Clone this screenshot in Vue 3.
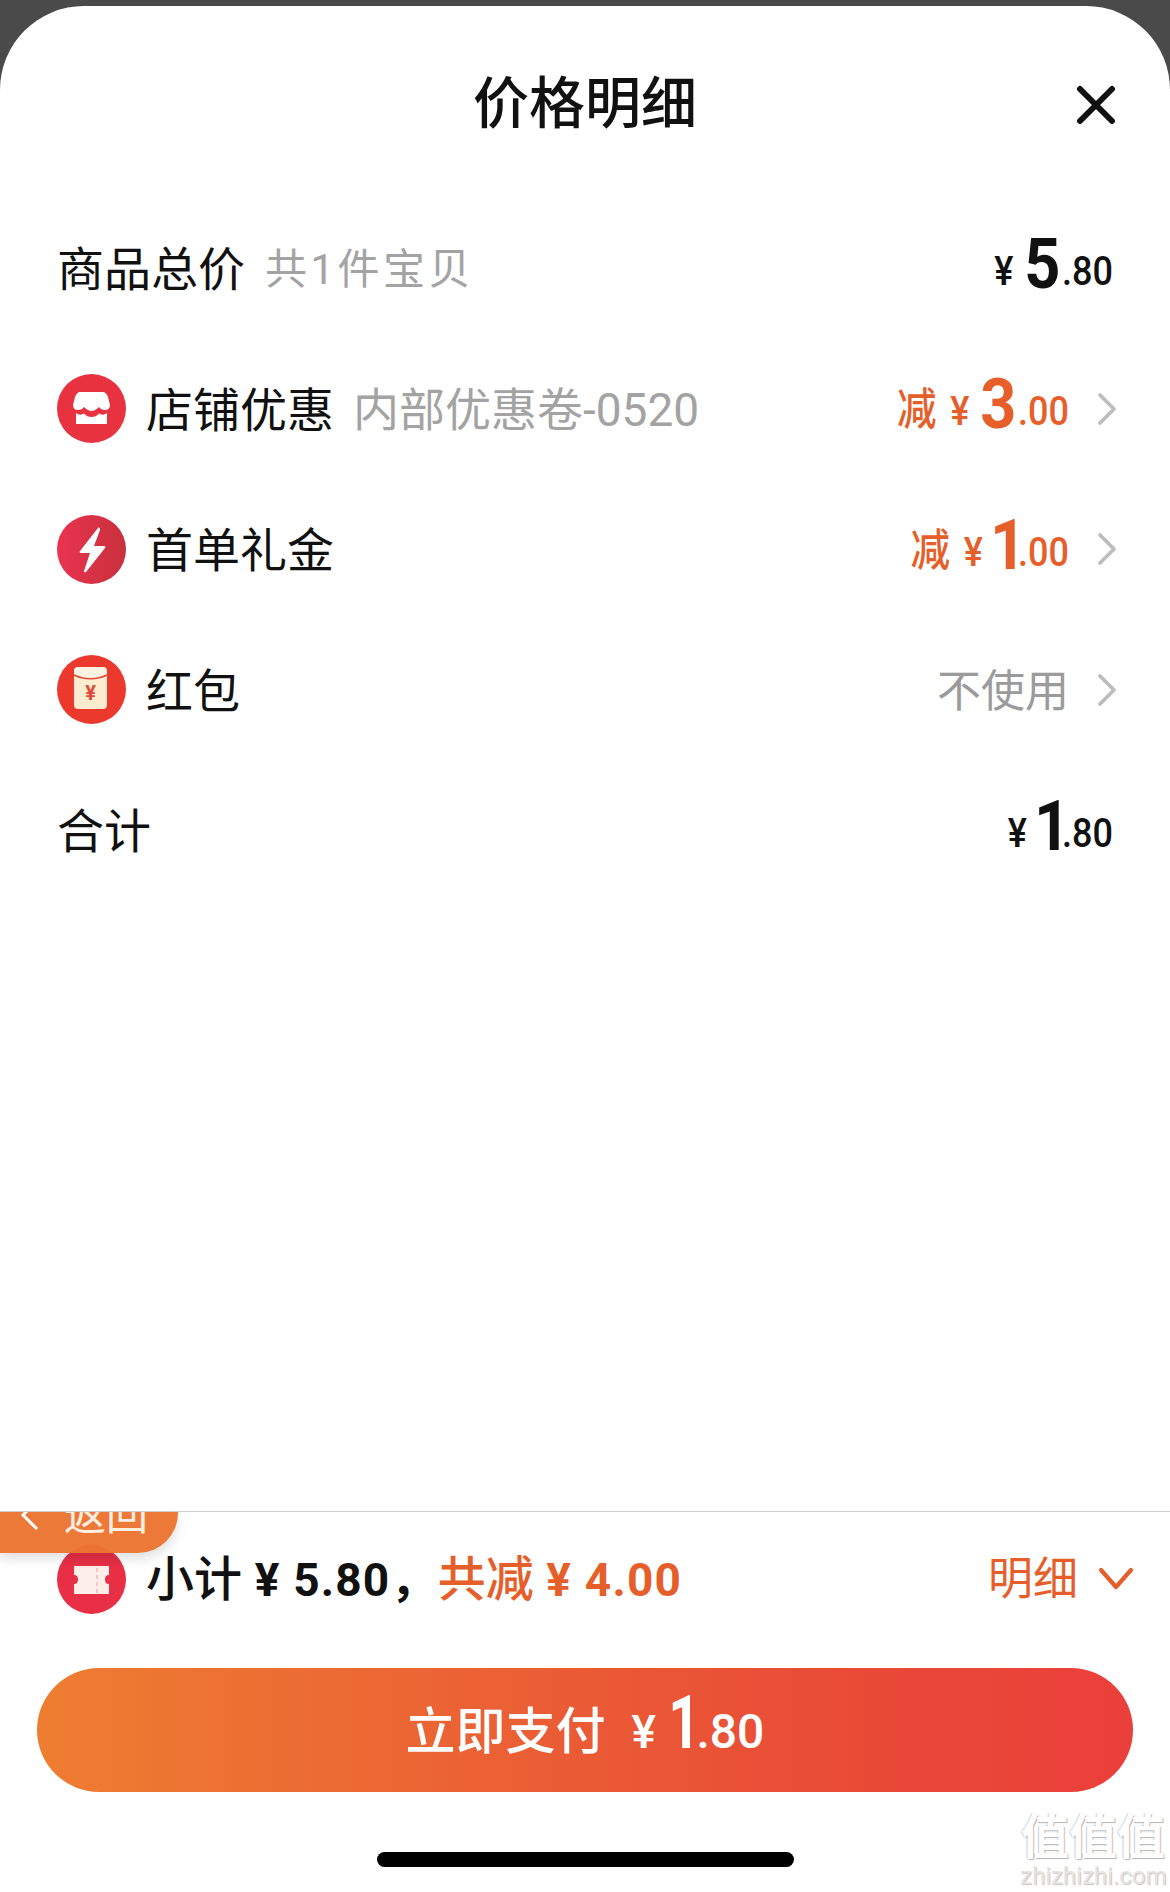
<script setup>
const rows = [
  { id: 'shop', label: '店铺优惠', sub: '内部优惠卷-0520', prefix: '减', big: '3', small: '.00' },
  { id: 'bolt', label: '首单礼金', prefix: '减', big: '1', small: '.00' },
  { id: 'packet', label: '红包', none: '不使用' }
]
</script>

<template>
  <div class="page">
    <div class="sheet">
      <!-- 标题 -->
      <header class="head">
        <h1 class="title">价格明细</h1>
        <svg class="close" viewBox="0 0 40 40">
          <path d="M4 4 36 36M36 4 4 36" stroke="#111" stroke-width="6" stroke-linecap="round" fill="none" />
        </svg>
      </header>

      <div class="row">
        <span class="label">商品总价</span>
        <span class="sub sub-first">共1件宝贝</span>
        <span class="price dark">
          <span class="yen">¥</span><span class="big">5</span><span class="small">.80</span>
        </span>
      </div>

      <div class="row" v-for="r in rows" :key="r.id">
        <svg class="icon" viewBox="0 0 69 69">
          <template v-if="r.id === 'shop'">
            <circle cx="34.5" cy="34.5" r="34.5" fill="#e8323f" />
            <path d="M23 18H46C48 18 50 20 51 23L53 31Q53 36 48 36Q44 36 42 33Q38 37 34.500 37Q31 37 27 33Q25 36 21 36Q16 36 16 31L18 23C19 20 21 18 23 18Z" fill="#fff" />
            <path d="M19 39Q23 42 27 39.500Q30 43 34.500 43Q39 43 42 39.500Q46 42 50 39V50H19Z" fill="#fff" />
          </template>
          <template v-else-if="r.id === 'bolt'">
            <defs>
              <linearGradient id="boltBg" x1="0" y1="0" x2="1" y2="0">
                <stop offset="0" stop-color="#ea3350" />
                <stop offset="1" stop-color="#c8303c" />
              </linearGradient>
            </defs>
            <circle cx="34.5" cy="34.5" r="34.5" fill="url(#boltBg)" />
            <path d="M41 13 23 36c-1 1 0 2 1 2h9l-6 18c0 1 1 2 2 1l19-24c1-1 0-2-1-2H37l6-16c0-2-1-3-2-2z" fill="#fff" />
          </template>
          <template v-else>
            <circle cx="34.5" cy="34.5" r="34.5" fill="#ec392e" />
            <rect x="17" y="12" width="33" height="42" rx="4" fill="#fdeccf" />
            <path d="M17 16c0-2 2-4 4-4h25c2 0 4 2 4 4v4c-10 5-23 5-33 0z" fill="#fdf3e2" />
            <path d="M17 20c10 5 23 5 33 0" stroke="#e2493a" stroke-width="1.6" fill="none" />
            <text x="33.5" y="45" text-anchor="middle" class="packet-yen">¥</text>
          </template>
        </svg>
        <span class="label">{{ r.label }}</span>
        <span v-if="r.sub" class="sub">{{ r.sub }}</span>
        <span v-if="r.none" class="none">不使用</span>
        <span v-else class="price orange">
          <span class="cut">{{ r.prefix }}</span><span class="yen">¥</span><span class="big" :class="{ narrow: r.big === '1' }">{{ r.big }}</span><span class="small">{{ r.small }}</span>
        </span>
        <svg class="arrow" viewBox="0 0 20 34">
          <path d="M3 3 17 17 3 31" stroke="#bdbdbd" stroke-width="3.8" stroke-linecap="round" stroke-linejoin="round" fill="none" />
        </svg>
      </div>

      <div class="row">
        <span class="label">合计</span>
        <span class="price dark">
          <span class="yen">¥</span><span class="big narrow">1</span><span class="small">.80</span>
        </span>
      </div>

      <footer class="foot">
        <div class="back">
          <svg class="back-arrow" viewBox="0 0 20 34">
            <path d="M17 3 3 17 17 31" stroke="#fff" stroke-width="3" fill="none" />
          </svg>
          <span>返回</span>
        </div>

        <div class="total">
          <svg class="icon" viewBox="0 0 69 69">
            <circle cx="34.5" cy="34.5" r="34.5" fill="#e92f46" />
            <path d="M17 21h35v9c-3 0-4 2-4 4.500s1 4.500 4 4.500v10H17V39c3 0 4-2 4-4.500S20 30 17 30z" fill="#fdeeea" />
            <path d="M40 23v25" stroke="#f5b5b0" stroke-width="1.400" stroke-dasharray="4 3" />
          </svg>
          <span class="sum">小计<span class="num"> ¥ 5.80，</span></span>
          <span class="saved">共减<span class="num"> ¥ 4.00</span></span>
          <span class="detail">明细</span>
          <svg class="down" viewBox="0 0 36 26">
            <path d="M3 4 18 21 33 4" stroke="#e65f2b" stroke-width="4.200" stroke-linecap="round" stroke-linejoin="round" fill="none" />
          </svg>
        </div>

        <button class="pay">
          <span class="pay-text">立即支付</span>
          <span class="pay-price"><span class="yen">¥</span><span class="big">1</span><span class="small">.80</span></span>
        </button>

        <div class="home-bar"></div>
      </footer>
    </div>

    <!-- 水印 -->
    <div class="mark">
      <div class="mark-cn">值值值</div>
      <div class="mark-en">zhizhizhi.com</div>
    </div>
  </div>
</template>

<style scoped>
.page {
  position: relative;
  width: 1170px;
  height: 1892px;
  overflow: hidden;
  background: #4a4a4a;
  padding-top: 6px;
  box-sizing: border-box;
  font-family: Roboto, "Noto Sans CJK SC", sans-serif;
  color: #111;
}

.sheet {
  height: 1886px;
  background: #fff;
  border-radius: 84px 84px 0 0;
  display: flex;
  flex-direction: column;
}

.head {
  height: 192px;
  flex-shrink: 0;
  display: grid;
  grid-template-columns: 1fr auto 1fr;
  align-items: center;
  box-sizing: border-box;
}

.title {
  grid-column: 2;
  margin: 4px 0 0;
  font-size: 56px;
  font-weight: 500;
  line-height: 70px;
}

.close {
  justify-self: end;
  width: 40px;
  height: 40px;
  margin-right: 54px;
  margin-top: 6px;
}

.row {
  height: 140.500px;
  flex-shrink: 0;
  display: flex;
  align-items: center;
  padding: 0 53px 0 57px;
  box-sizing: border-box;
}

.icon {
  width: 69px;
  height: 69px;
  flex-shrink: 0;
  margin-right: 20px;
}

.label {
  font-size: 47px;
  line-height: 60px;
  margin-top: 4px;
}

.sub {
  font-size: 46px;
  color: #a3a3a3;
  margin-left: 19px;
  margin-bottom: 5px;
}

.sub-first {
  font-size: 42px;
  letter-spacing: 3.500px;
  margin-left: 20px;
}

.none {
  margin-left: auto;
  font-size: 44px;
  color: #9b9b9b;
  margin-bottom: 4px;
}

.price {
  margin-left: auto;
  display: inline-block;
  font-weight: 500;
  line-height: 70px;
  transform: scaleX(0.9);
  transform-origin: right center;
  white-space: nowrap;
  margin-top: 10px;
}

.dark {
  color: #111;
  margin-right: 4px;
}

.orange {
  color: #e65f2b;
}

.yen {
  font-size: 40px;
  margin-right: 12px;
  vertical-align: 3px;
}

.big {
  font-size: 70px;
  font-weight: 700;
  margin-right: 2px;
}

.narrow {
  margin-left: -4px;
  margin-right: 0;
  letter-spacing: -9px;
}

.small {
  font-size: 40px;
  vertical-align: 3px;
}

.cut {
  font-size: 44px;
  margin-right: 15px;
  vertical-align: 3px;
}

.arrow {
  width: 20px;
  height: 34px;
  margin-left: 28px;
  flex-shrink: 0;
}

.packet-yen {
  font-size: 20px;
  font-weight: 700;
  fill: #e2493a;
}

.foot {
  margin-top: auto;
  position: relative;
  border-top: 1px solid #cfcfcf;
  display: flex;
  flex-direction: column;
  align-items: center;
  padding-bottom: 25px;
}

.back {
  position: absolute;
  left: 0;
  top: 0;
  width: 178px;
  height: 41px;
  overflow: hidden;
  display: flex;
  align-items: flex-end;
  box-sizing: border-box;
  padding-left: 20px;
  background: rgba(236, 116, 48, 0.96);
  border-radius: 0 0 40px 0;
  box-shadow: 0 6px 12px rgba(0, 0, 0, 0.12);
  color: #fdeee2;
  font-size: 42px;
  line-height: 62px;
}

.back-arrow {
  width: 20px;
  height: 34px;
  flex-shrink: 0;
  margin-right: 24px;
  margin-bottom: 21px;
}

.back span {
  display: block;
  height: 62px;
  margin-bottom: 6px;
}

.total {
  align-self: stretch;
  height: 134px;
  display: flex;
  align-items: center;
  padding: 0 36px 0 57px;
}

.sum {
  font-size: 48px;
  font-weight: 500;
  white-space: pre;
  margin-bottom: 8px;
}

.num {
  font-size: 46px;
  font-weight: 700;
  letter-spacing: 1.200px;
}

.saved {
  font-size: 48px;
  font-weight: 500;
  color: #e65f2b;
  white-space: pre;
  margin-bottom: 8px;
}

.detail {
  margin-left: auto;
  font-size: 45px;
  color: #e65f2b;
  margin-bottom: 8px;
}

.down {
  width: 36px;
  height: 26px;
  margin-left: 20px;
}

.pay {
  width: 1096px;
  height: 124px;
  flex-shrink: 0;
  margin-top: 22px;
  border: none;
  border-radius: 62px;
  background: linear-gradient(90deg, #ee7d31, #e94d37 70%, #ea3f3a);
  color: #fff;
  font-family: inherit;
  display: flex;
  align-items: center;
  justify-content: center;
  gap: 26px;
  padding: 0;
}

.pay-text {
  font-size: 50px;
  font-weight: 500;
  margin-bottom: 6px;
}

.pay-price {
  display: inline-block;
  font-weight: 500;
  line-height: 74px;
  white-space: nowrap;
  margin-top: 6px;
}

.pay-price .yen {
  font-size: 46px;
  margin-right: 3px;
  vertical-align: 0;
}

.pay-price .big {
  display: inline-block;
  font-size: 74px;
  margin-right: 0;
  letter-spacing: -5px;
  transform: scaleX(0.75);
  transform-origin: right center;
}

.pay-price .small {
  font-size: 48px;
  vertical-align: 0;
}

.home-bar {
  width: 417px;
  height: 15px;
  flex-shrink: 0;
  margin-top: 60px;
  border-radius: 8px;
  background: #000;
}

.mark {
  position: absolute;
  right: 4px;
  bottom: 3px;
  width: 146px;
  text-align: center;
}

.mark-cn {
  font-size: 48px;
  line-height: 50px;
  font-weight: 700;
  color: #fff;
  text-shadow: 1px 1px 1px #b5b5b5, -1px 0 1px #cfcfcf;
}

.mark-en {
  font-size: 24px;
  line-height: 26px;
  color: #e4e4e4;
  text-shadow: 1px 1px 1px #c4c4c4;
}
</style>
